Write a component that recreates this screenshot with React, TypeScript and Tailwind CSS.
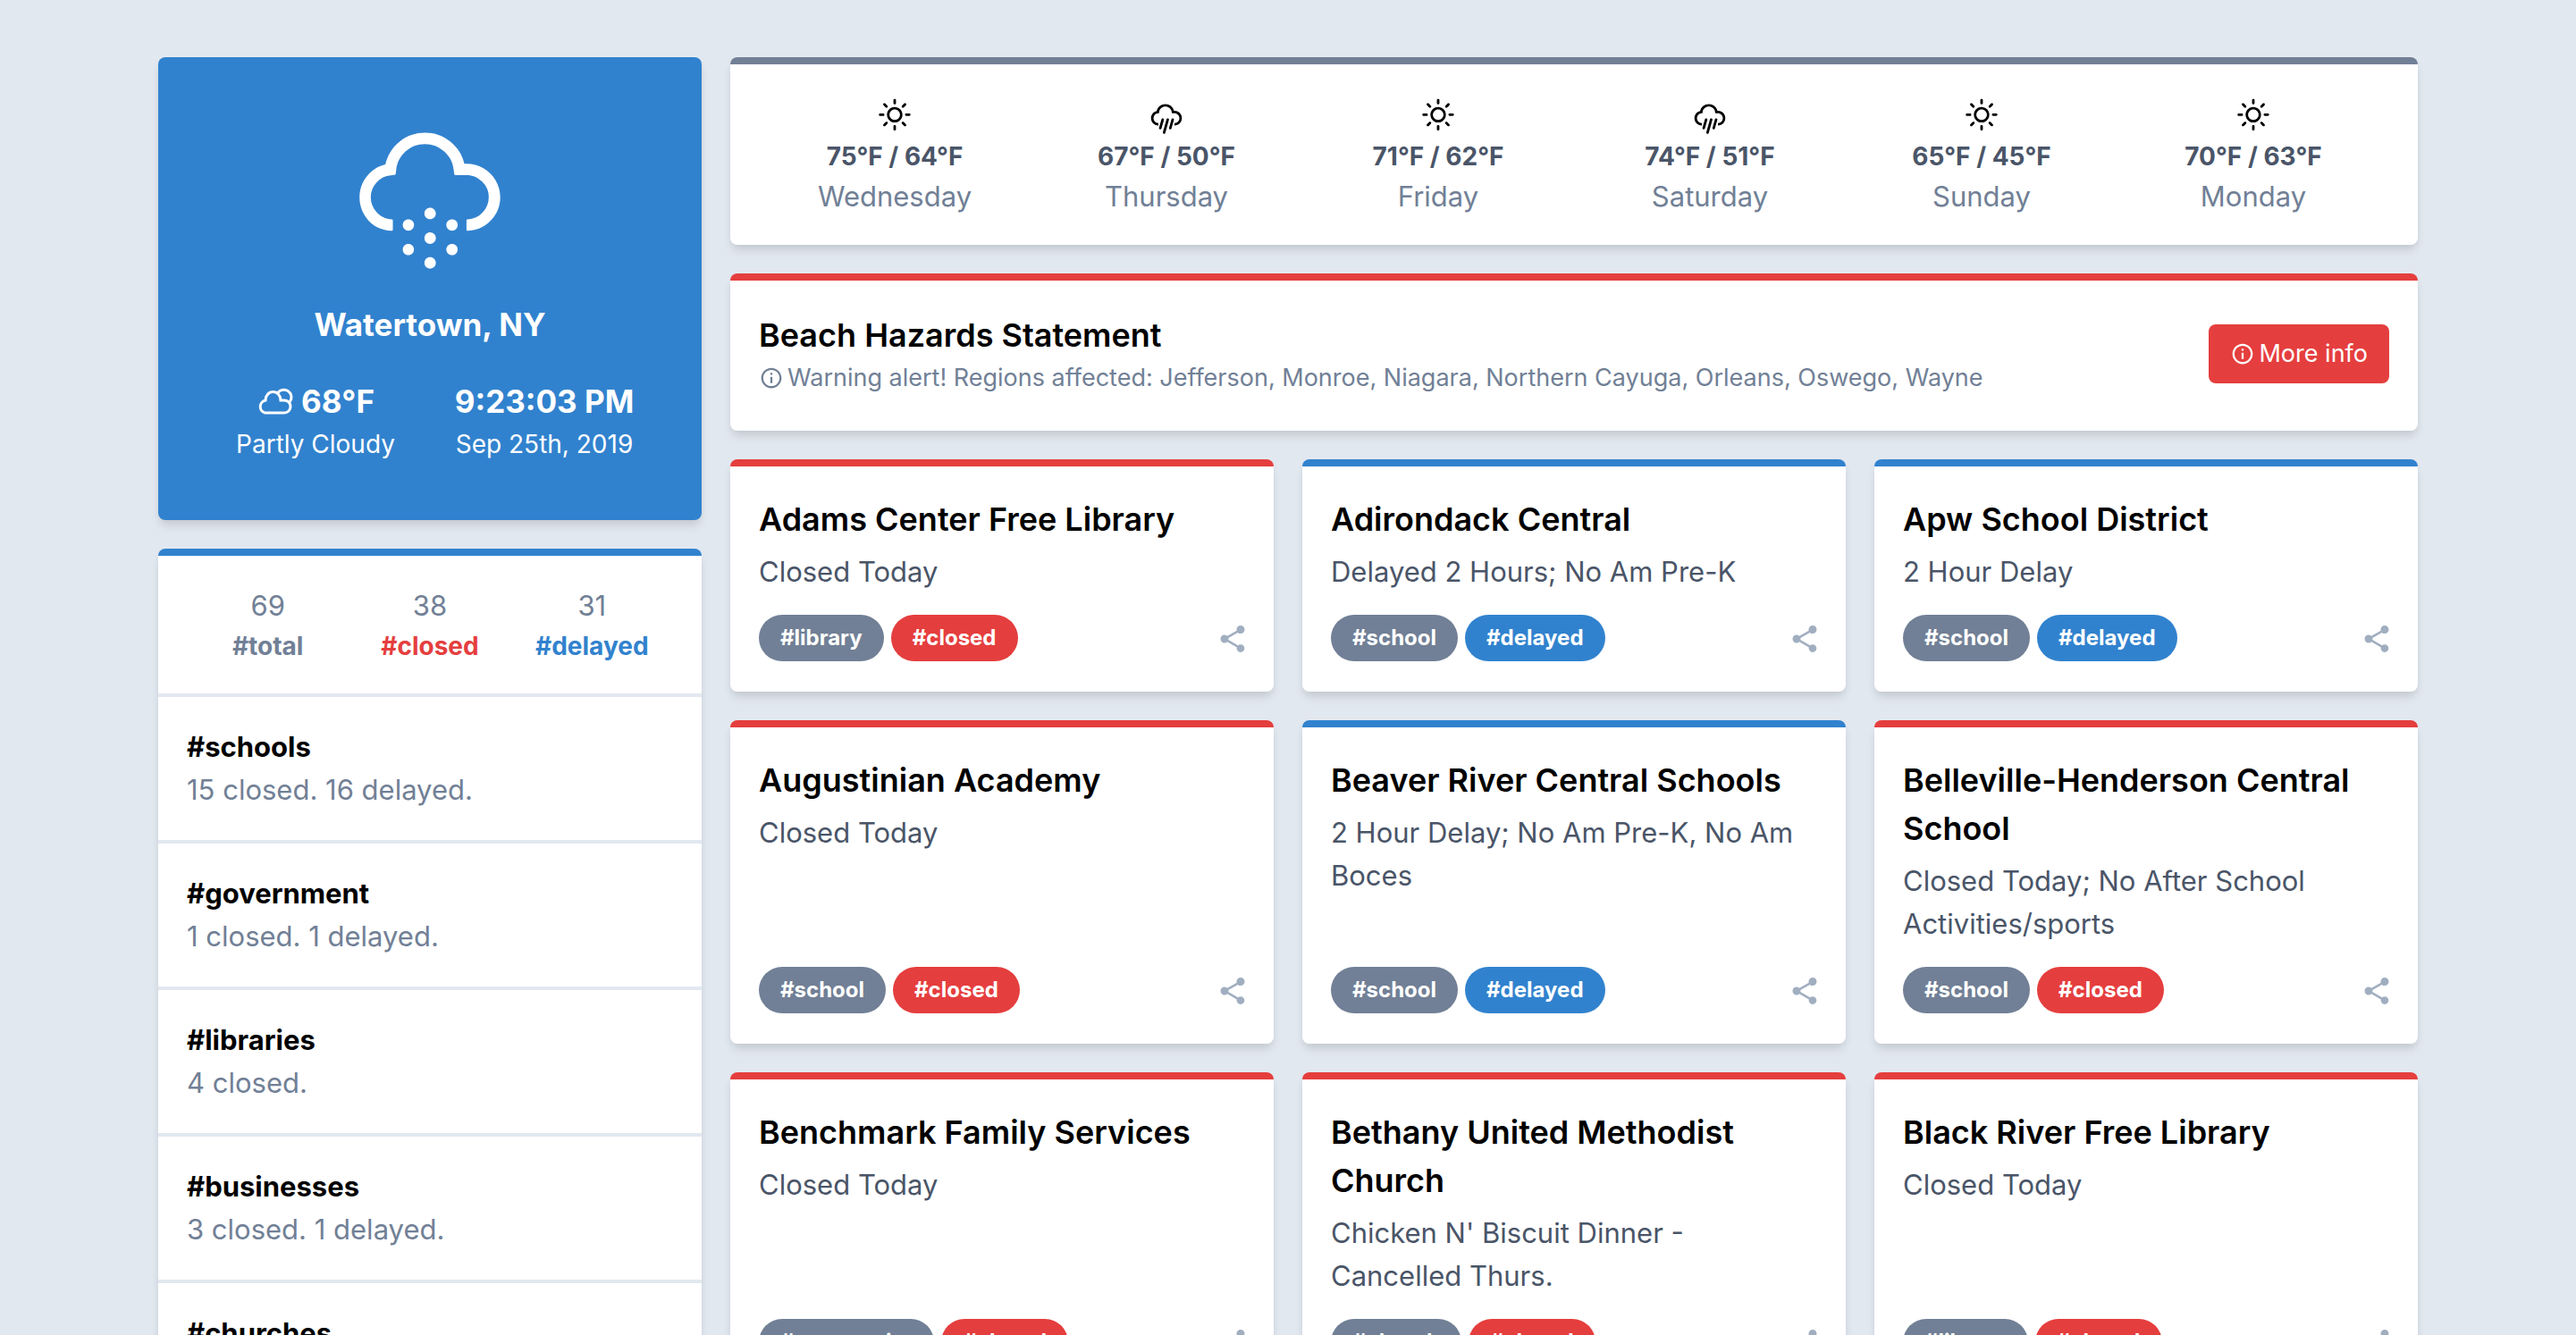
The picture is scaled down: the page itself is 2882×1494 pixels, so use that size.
import React from 'react'
import { IoMdInformationCircleOutline, IoMdShare } from 'react-icons/io';
import { WiDaySunny, WiRain, WiSnow } from 'react-icons/wi';

type Status = 'closed' | 'delayed';

const textColor = {
  total: 'text-[#718096]',
  closed: 'text-[#e53e3e]',
  delayed: 'text-[#3182ce]'
};

const borderColor = {
  closed: 'border-[#e53e3e]',
  delayed: 'border-[#3182ce]'
};

const tagColor = {
  closed: 'bg-[#e53e3e]',
  delayed: 'bg-[#3182ce]'
};

const cardShadow = 'shadow-[0_8px_12px_-2px_rgba(0,0,0,0.1),0_4px_8px_-2px_rgba(0,0,0,0.06)]';

const totals: { count: number; label: 'total' | Status }[] = [
  { count: 69, label: 'total' },
  { count: 38, label: 'closed' },
  { count: 31, label: 'delayed' }
];

const categories = [
  { name: 'schools', summary: '15 closed. 16 delayed.' },
  { name: 'government', summary: '1 closed. 1 delayed.' },
  { name: 'libraries', summary: '4 closed.' },
  { name: 'businesses', summary: '3 closed. 1 delayed.' },
  { name: 'churches', summary: '4 closed.' }
];

const forecast = [
  { day: 'Wednesday', high: 75, low: 64, icon: WiDaySunny },
  { day: 'Thursday', high: 67, low: 50, icon: WiRain },
  { day: 'Friday', high: 71, low: 62, icon: WiDaySunny },
  { day: 'Saturday', high: 74, low: 51, icon: WiRain },
  { day: 'Sunday', high: 65, low: 45, icon: WiDaySunny },
  { day: 'Monday', high: 70, low: 63, icon: WiDaySunny }
];

const closings: { name: string; details: string; tag: string; status: Status }[] = [
  { name: 'Adams Center Free Library', details: 'Closed Today', tag: 'library', status: 'closed' },
  { name: 'Adirondack Central', details: 'Delayed 2 Hours; No Am Pre-K', tag: 'school', status: 'delayed' },
  { name: 'Apw School District', details: '2 Hour Delay', tag: 'school', status: 'delayed' },
  { name: 'Augustinian Academy', details: 'Closed Today', tag: 'school', status: 'closed' },
  { name: 'Beaver River Central Schools', details: '2 Hour Delay; No Am Pre-K, No Am Boces', tag: 'school', status: 'delayed' },
  { name: 'Belleville-Henderson Central School', details: 'Closed Today; No After School Activities/sports', tag: 'school', status: 'closed' },
  { name: 'Benchmark Family Services', details: 'Closed Today', tag: 'community', status: 'closed' },
  { name: 'Bethany United Methodist Church', details: "Chicken N' Biscuit Dinner - Cancelled Thurs.", tag: 'church', status: 'closed' },
  { name: 'Black River Free Library', details: 'Closed Today', tag: 'library', status: 'closed' }
];

function CloudyIcon() {
  return (
    <svg viewBox="0 0 42 30" className="h-[30px] w-[42px]" fill="none" stroke="currentColor" strokeWidth="3" strokeLinecap="round" aria-hidden="true">
      <path d="M9.5 28H31a7 7 0 0 0 0-14h-4a8.5 9.6 0 0 0-17 0a7.2 7.2 0 0 0-.5 14z" />
      <path d="M23.8 5.5a8.3 8.3 0 1 1 13.5 10.2" />
    </svg>
  )
}

function CurrentWeather() {
  return (
    <section className={`rounded-lg bg-[#3182ce] px-12 pt-7 pb-16 text-center text-white ${cardShadow}`}>
      <WiSnow className="mx-auto mb-4 size-[228px]" />
      <h1 className="text-[35px] leading-[54px] font-bold">Watertown, NY</h1>
      <div className="mt-8 grid grid-cols-2">
        <div>
          <p className="flex items-center justify-center gap-2 text-[35px] leading-[54px] font-bold">
            <CloudyIcon />
            68°F
          </p>
          <p className="text-[28px] leading-[42px]">Partly Cloudy</p>
        </div>
        <div>
          <p className="text-[35px] leading-[54px] font-bold">9:23:03 PM</p>
          <p className="text-[28px] leading-[42px]">Sep 25th, 2019</p>
        </div>
      </div>
    </section>
  )
}

function Summary() {
  return (
    <section className={`rounded-lg border-t-8 border-[#3182ce] bg-white ${cardShadow}`}>
      <div className="grid grid-cols-3 p-8 text-center">
        {totals.map((item) => (
          <div key={item.label}>
            <p className="text-[31px] leading-[48px] text-[#718096]">{item.count}</p>
            <p className={`text-[28px] leading-[42px] font-bold ${textColor[item.label]}`}>#{item.label}</p>
          </div>
        ))}
      </div>
      {categories.map((category) => (
        <div key={category.name} className="border-t-4 border-[#e2e8f0] p-8 text-[31px] leading-[48px]">
          <h2 className="font-bold">#{category.name}</h2>
          <p className="text-[#718096]">{category.summary}</p>
        </div>
      ))}
    </section>
  )
}

function Forecast() {
  return (
    <section className={`grid grid-cols-6 rounded-lg border-t-8 border-[#718096] bg-white px-8 pt-8 pb-[30px] text-center ${cardShadow}`}>
      {forecast.map(({ day, high, low, icon: Icon }) => (
        <div key={day}>
          <Icon className="mx-auto size-[50px]" />
          <p className="text-[28px] leading-[42px] font-bold text-[#4a5568]">{high}°F / {low}°F</p>
          <p className="text-[31px] leading-[48px] text-[#718096]">{day}</p>
        </div>
      ))}
    </section>
  )
}

function Alert() {
  return (
    <section className={`flex items-center justify-between rounded-lg border-t-8 border-[#e53e3e] bg-white px-8 pt-[34px] pb-[38px] ${cardShadow}`}>
      <div>
        <h2 className="text-[36px] leading-[54px] font-semibold">Beach Hazards Statement</h2>
        <p className="flex items-center gap-1 text-[27px] leading-[42px] text-[#718096]">
          <IoMdInformationCircleOutline className="size-7" />
          Warning alert! Regions affected: Jefferson, Monroe, Niagara, Northern Cayuga, Orleans, Oswego, Wayne
        </p>
      </div>
      <button className="flex items-center gap-1 rounded-lg bg-[#e53e3e] px-6 py-3 text-[27px] leading-[42px] text-white">
        <IoMdInformationCircleOutline className="size-7" />
        More info
      </button>
    </section>
  )
}

function App() {
  return (
    <div className="min-h-screen bg-[#e2e8f0] font-['Inter',sans-serif] text-black">
      <div className="mx-auto grid max-w-[2560px] grid-cols-4 items-start gap-8 px-4 py-16">
        <aside className="flex flex-col gap-8">
          <CurrentWeather />
          <Summary />
        </aside>

        <main className="col-span-3 flex flex-col gap-8">
          <Forecast />
          <Alert />
          <div className="grid grid-cols-3 gap-8">
            {closings.map((item) => (
              <article key={item.name} className={`flex flex-col rounded-lg border-t-8 bg-white p-8 ${borderColor[item.status]} ${cardShadow}`}>
                <h2 className="text-[36px] leading-[54px] font-semibold">{item.name}</h2>
                <p className="mt-2 mb-6 text-[31px] leading-[48px] text-[#4a5568]">{item.details}</p>
                <div className="mt-auto flex items-center justify-between">
                  <div className="flex gap-2 pb-0.5 text-2xl leading-9 font-bold text-white">
                    <span className="rounded-full bg-[#718096] px-6 py-2">#{item.tag}</span>
                    <span className={`rounded-full px-6 py-2 ${tagColor[item.status]}`}>#{item.status}</span>
                  </div>
                  <button aria-label={`Share ${item.name}`} className="-mr-1 text-[#a0aec0]">
                    <IoMdShare className="size-9" />
                  </button>
                </div>
              </article>
            ))}
          </div>
        </main>
      </div>
    </div>
  )
}

export default App
